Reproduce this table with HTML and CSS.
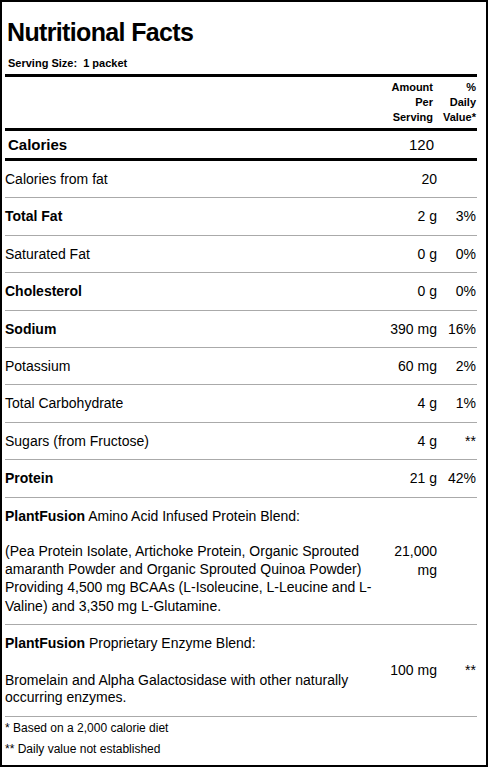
FILE: index.html
```html
<!DOCTYPE html>
<html>
<head>
<meta charset="utf-8">
<link rel="stylesheet" href="styles.css">
</head>
<body>
<div class="label">
  <div class="top">
    <h1 class="title">Nutritional Facts</h1>
    <div class="serving">Serving Size:&nbsp; 1 packet</div>
  </div>
  <table class="facts">
    <colgroup><col><col class="c-amt"><col class="c-dv"></colgroup>
    <tr class="head">
      <td></td>
      <td class="amt">Amount<br>Per<br>Serving</td>
      <td class="dv">%<br>Daily<br>Value*</td>
    </tr>
    <tr class="cal">
      <td class="name">Calories</td>
      <td class="amt">120</td>
      <td class="dv"></td>
    </tr>
    <tr class="row"><td>Calories from fat</td><td class="amt">20</td><td class="dv"></td></tr>
    <tr class="row"><td class="b">Total Fat</td><td class="amt">2 g</td><td class="dv">3%</td></tr>
    <tr class="row"><td>Saturated Fat</td><td class="amt">0 g</td><td class="dv">0%</td></tr>
    <tr class="row"><td class="b">Cholesterol</td><td class="amt">0 g</td><td class="dv">0%</td></tr>
    <tr class="row"><td class="b">Sodium</td><td class="amt">390 mg</td><td class="dv">16%</td></tr>
    <tr class="row"><td>Potassium</td><td class="amt">60 mg</td><td class="dv">2%</td></tr>
    <tr class="row"><td>Total Carbohydrate</td><td class="amt">4 g</td><td class="dv">1%</td></tr>
    <tr class="row"><td>Sugars (from Fructose)</td><td class="amt">4 g</td><td class="dv">**</td></tr>
    <tr class="row"><td class="b">Protein</td><td class="amt">21 g</td><td class="dv">42%</td></tr>
    <tr class="blend-title">
      <td><b>PlantFusion</b> Amino Acid Infused Protein Blend:</td>
      <td class="amt span" rowspan="2">21,000<br>mg</td>
      <td class="dv span" rowspan="2"></td>
    </tr>
    <tr class="blend-desc">
      <td>(Pea Protein Isolate, Artichoke Protein, Organic Sprouted amaranth Powder and Organic Sprouted Quinoa Powder) Providing 4,500 mg BCAAs (L-Isoleucine, L-Leucine and L-Valine) and 3,350 mg L-Glutamine.</td>
    </tr>
    <tr class="blend-title">
      <td><b>PlantFusion</b> Proprietary Enzyme Blend:</td>
      <td class="amt span" rowspan="2">100 mg</td>
      <td class="dv span" rowspan="2">**</td>
    </tr>
    <tr class="blend-desc enzyme">
      <td>Bromelain and Alpha Galactosidase with other naturally occurring enzymes.</td>
    </tr>
  </table>
  <div class="notes">
    <p class="note">* Based on a 2,000 calorie diet</p>
    <p class="note">** Daily value not established</p>
  </div>
</div>
</body>
</html>
```
FILE: styles.css
```css
html, body {
  margin: 0;
  padding: 0;
  background: #fff;
}
body {
  font-family: "Liberation Sans", Arial, sans-serif;
  color: #000;
}
.label {
  box-sizing: border-box;
  width: 488px;
  height: 767px;
  border: 2px solid #000;
  padding: 0 9px 0 3px;
  overflow: hidden;
}
.top {
  padding-left: 3px;
}
.title {
  margin: 16px 0 0 -1px;
  font-size: 25px;
  line-height: 29px;
  font-weight: bold;
  letter-spacing: -0.65px;
}
.serving {
  margin-top: 10px;
  font-size: 11px;
  line-height: 13px;
  font-weight: bold;
}
.facts {
  width: 472px;
  margin-top: 4px;
  border-collapse: separate;
  border-spacing: 0;
  border-top: 3px solid #000;
  table-layout: fixed;
  font-size: 14px;
}
.c-amt { width: 62px; }
.c-dv { width: 39px; }
.facts td {
  padding: 0;
  vertical-align: middle;
}
.amt, .dv {
  text-align: right;
  white-space: nowrap;
}
.head td {
  font-size: 11px;
  font-weight: bold;
  line-height: 15px;
  padding: 3px 0;
  border-bottom: 3px solid #000;
}
.head .amt { padding-right: 5px; }
.head .dv { padding-right: 1px; }
.cal td {
  font-size: 15px;
  line-height: 18px;
  padding: 4.5px 0;
  border-bottom: 3px solid #000;
}
.cal .name {
  font-weight: bold;
  padding-left: 3px;
}
.cal .amt { padding-right: 4px; }
.row td {
  line-height: 18.2px;
  padding: 9.1px 0;
  border-bottom: 1px solid #aaa;
}
.row .amt, .blend-title .amt { padding-right: 1px; }
.row .dv, .blend-title .dv { padding-right: 1px; }
.b { font-weight: bold; }
.blend-title td {
  line-height: 18.2px;
  padding: 9.1px 0;
}
.blend-title td.span {
  border-bottom: 1px solid #aaa;
}
.blend-desc td {
  line-height: 18.2px;
  padding: 8px 4px 9.1px 0;
  border-bottom: 1px solid #aaa;
}
.enzyme td {
  line-height: 17.5px;
  padding-top: 10.5px;
}
.notes {
  width: 472px;
}
.note {
  margin: 0;
  font-size: 12px;
  line-height: 14px;
  padding: 4.5px 0 2.5px;
}
```
